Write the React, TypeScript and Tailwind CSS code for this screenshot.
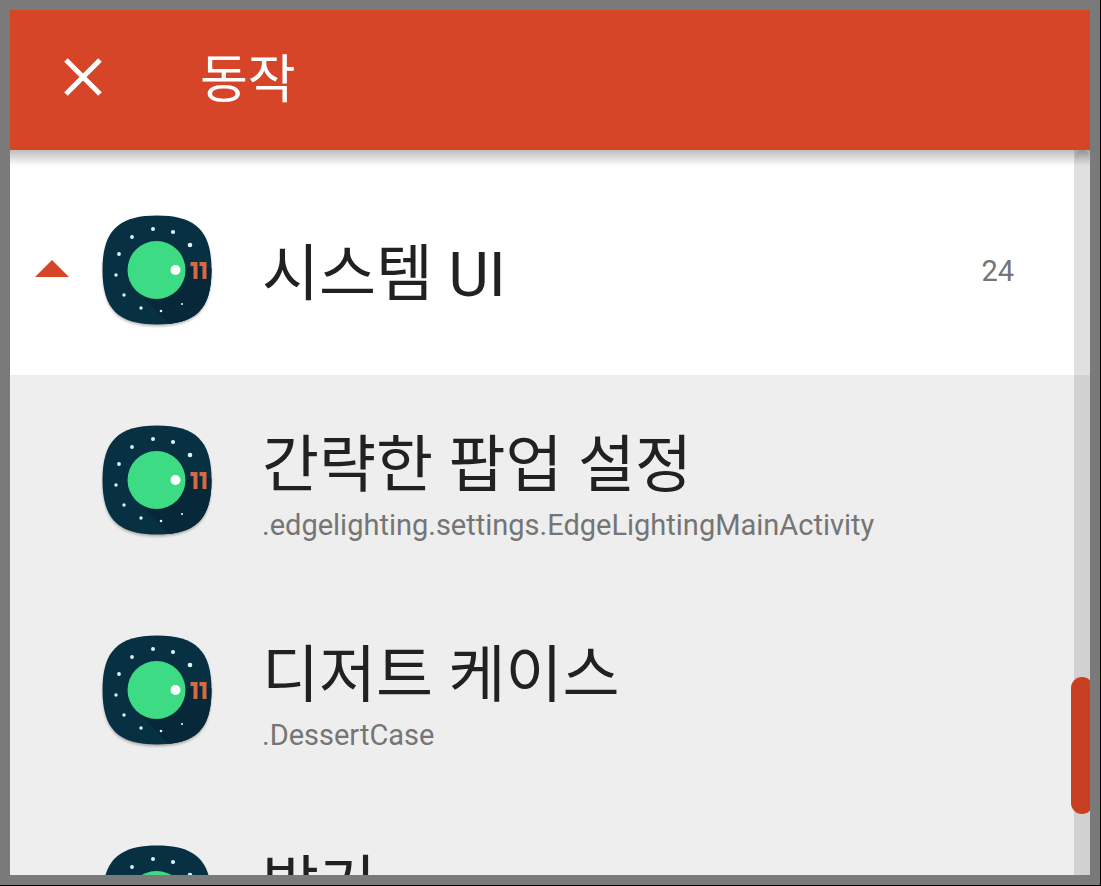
import { useState } from 'react';

const activities = [
  { name: '간략한 팝업 설정', path: '.edgelighting.settings.EdgeLightingMainActivity' },
  { name: '디저트 케이스', path: '.DessertCase' },
  { name: '밝기', path: '' },
];

// Small stars around the dial: x, y, radius
const stars = [
  [51, 14, 2],
  [71, 17, 2.1],
  [88, 30, 2.3],
  [30, 22, 1.9],
  [17, 39, 1.9],
  [14, 60, 1.7],
  [22, 80, 1.7],
  [39, 93, 1.7],
  [59, 96, 1.3],
  [80, 89, 1.1],
];

const squircle =
  'M55 0.5C94 0.5 109.500 16 109.500 55C109.500 94 94 109.500 55 109.500C16 109.500 0.500 94 0.500 55C0.500 16 16 0.500 55 0.500Z';

function AppIcon() {
  return (
    <svg className="size-[110px] shrink-0 overflow-visible" viewBox="0 0 110 110" aria-hidden="true">
      <defs>
        <clipPath id="squircle">
          <path d={squircle} />
        </clipPath>
      </defs>
      <path className="drop-shadow-[0_2px_1px_rgba(0,0,0,0.25)]" d={squircle} fill="#073042" />
      <path d="M34 75L70 112H112V53H83Z" fill="#062838" clipPath="url(#squircle)" />
      {stars.map(([x, y, r]) => (
        <circle key={`${x}-${y}`} cx={x} cy={y} r={r} fill="#d9f3f8" />
      ))}
      <circle cx="54.500" cy="55" r="29" fill="#3ddc84" />
      <circle cx="73.500" cy="55" r="5" fill="#fff" />
      <path d="M88.500 47H95.500V64H91.500V51H88.500ZM97.500 47H104.500V64H100.500V51H97.500Z" fill="#d86842" />
    </svg>
  );
}

export default function App() {
  const [open, setOpen] = useState(true);

  return (
    <div className="h-screen border-r border-b border-black font-[Roboto,'Noto_Sans_CJK_KR',sans-serif]">
      <main className="relative flex h-full flex-col overflow-hidden border-10 border-[#7a7a7a] bg-[#eee]">
        <header className="flex h-[140px] shrink-0 items-center bg-[#d64527] pb-1.5 pl-[54px] text-white">
          <button type="button" aria-label="닫기" className="size-10 cursor-pointer">
            <svg viewBox="0 0 40 40" fill="none" stroke="currentColor" strokeWidth="5">
              <path d="M2 3L36 37M36 3L2 37" />
            </svg>
          </button>
          <h1 className="pt-2 pl-24 text-[52px]">동작</h1>
        </header>

        <div className="flex-1 overflow-hidden">
          <button
            type="button"
            aria-expanded={open}
            onClick={() => setOpen(!open)}
            className="flex h-[225px] w-full cursor-pointer items-center bg-white pt-[15px] pr-[76px] pl-[25px] text-left"
          >
            <svg className="mb-1 w-[34px] shrink-0" viewBox="0 0 34 17" aria-hidden="true">
              <path d="M17 0L34 17H0Z" fill="#d64527" />
            </svg>
            <span className="pl-[33px]">
              <AppIcon />
            </span>
            <span className="flex-1 pt-2 pl-[50px] text-[62px] text-[#212121]">시스템 UI</span>
            <span className="pt-1 text-[29px] text-[#757575]">24</span>
          </button>

          {open && (
            <ul>
              {activities.map((activity) => (
                <li key={activity.name} className="flex h-[210px] items-center pr-[76px] pl-[92px]">
                  <AppIcon />
                  <div className="min-w-0 pl-[50px]">
                    <h2 className="text-[62px] leading-[90px] text-[#212121]">{activity.name}</h2>
                    <p className="h-7 text-[29px] leading-7 text-[#757575]">{activity.path}</p>
                  </div>
                </li>
              ))}
            </ul>
          )}
        </div>

        {/* Fast scroll track and thumb */}
        <div className="absolute top-[140px] right-0 bottom-0 w-4 bg-black/12">
          <div className="mx-px h-3 rounded-t-full bg-linear-to-b from-black/12 to-transparent" />
          <div className="absolute top-[527px] -left-[3px] h-[137px] w-[22px] rounded-full bg-[#c93f22]" />
        </div>

        {/* Toolbar shadow */}
        <div className="pointer-events-none absolute inset-x-0 top-[140px] h-4 bg-linear-to-b from-black/26 to-transparent" />
      </main>
    </div>
  );
}
